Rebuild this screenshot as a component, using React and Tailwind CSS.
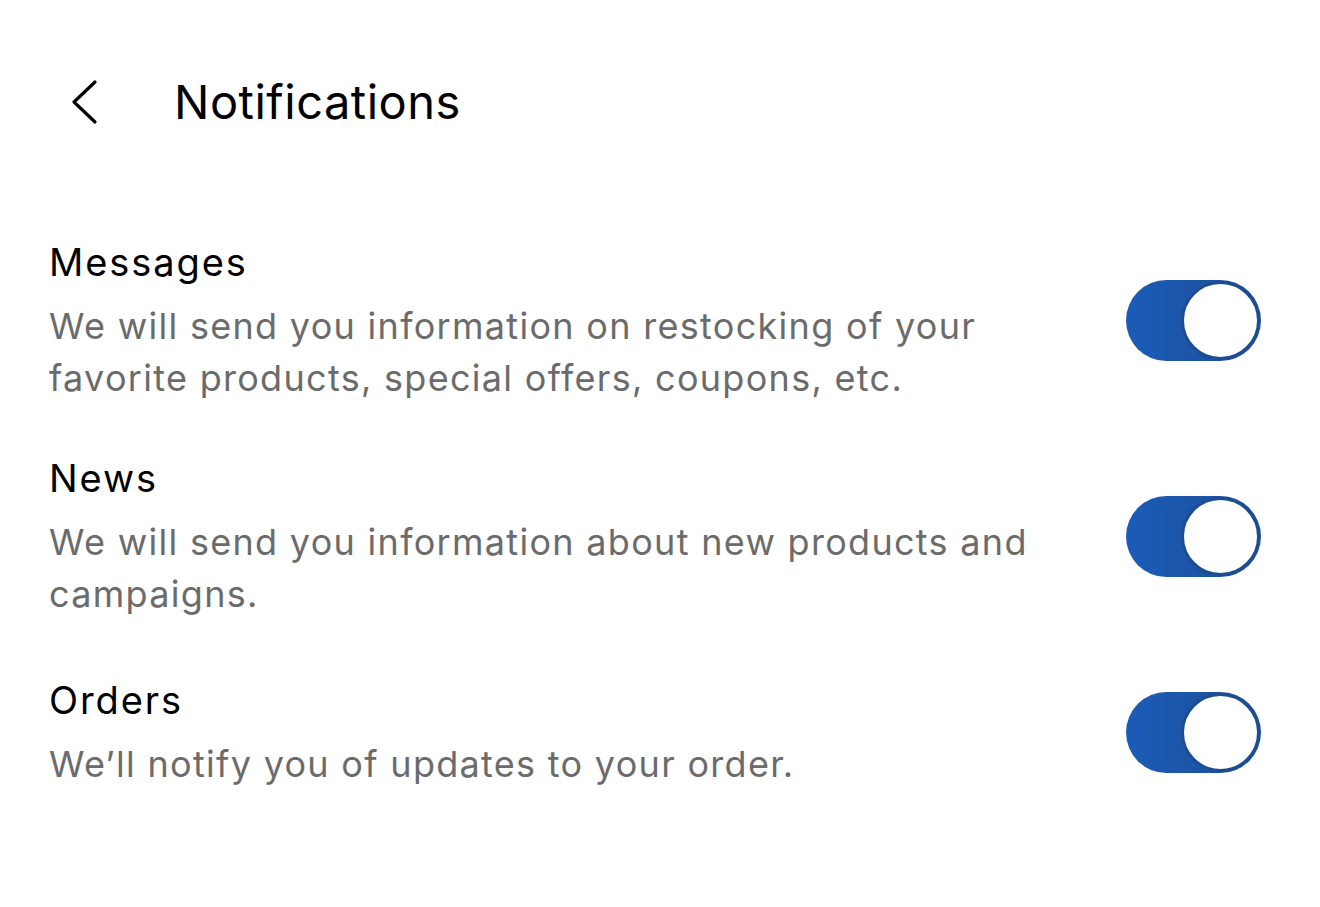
import { useState } from "react";

const items = [
  {
    id: "messages",
    title: "Messages",
    text: "We will send you information on restocking of your favorite products, special offers, coupons, etc.",
    gap: "",
  },
  {
    id: "news",
    title: "News",
    text: "We will send you information about new products and campaigns.",
    gap: "mt-[48px]",
  },
  {
    id: "orders",
    title: "Orders",
    text: "We\u2019ll notify you of updates to your order.",
    gap: "mt-[54px]",
  },
];

function Toggle({ on, onChange }) {
  return (
    <button
      onClick={onChange}
      className={
        "flex h-[81px] w-[135px] shrink-0 items-center rounded-full p-[1px] " +
        (on
          ? "justify-end bg-gradient-to-r from-[#1a5cb8] to-[#1e4e96]"
          : "justify-start bg-[#e5e5ea]")
      }
    >
      <span className="h-[79px] w-[79px] rounded-full border-[3px] border-[#1d4c90] bg-white" />
    </button>
  );
}

export default function App() {
  const [state, setState] = useState({ messages: true, news: true, orders: true });

  return (
    <div className="min-h-[907px] w-full bg-white font-['Inter',sans-serif] text-black">
      <header className="flex h-[236px] items-start pt-[72px]">
        <button className="ml-[70px] flex h-[60px] w-[30px] items-center">
          <svg width="28" height="48" viewBox="0 0 28 48" fill="none">
            <path d="M25 4 L4 24 L25 44" stroke="#000" strokeWidth="3.2" strokeLinecap="round" strokeLinejoin="round" />
          </svg>
        </button>
        <h1 className="ml-[74px] text-[47px] leading-[60px] tracking-[0.5px]">Notifications</h1>
      </header>

      <div className="flex flex-col pl-[49px] pr-[59px]">
        {items.map((it) => (
          <div key={it.id} className={"flex items-center justify-between " + it.gap}>
            <div className="w-[1010px]">
              <div className="text-[38px] leading-[52px] tracking-[1.9px]">{it.title}</div>
              <p className="mt-[12px] text-[36px] leading-[52px] tracking-[1.3px] text-[#6b6b6b]">{it.text}</p>
            </div>
            <Toggle
              on={state[it.id]}
              onChange={() => setState((s) => ({ ...s, [it.id]: !s[it.id] }))}
            />
          </div>
        ))}
      </div>
    </div>
  );
}
